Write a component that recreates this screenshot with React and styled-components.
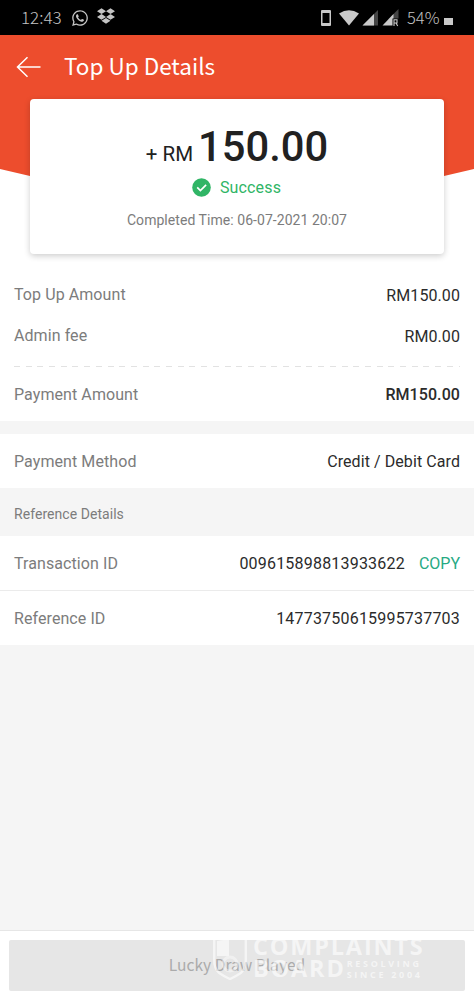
import React from 'react';
import styled, { createGlobalStyle } from 'styled-components';
import { FaWhatsapp, FaDropbox } from 'react-icons/fa';

const App = () => {
  return (
    <Screen>
      <GlobalStyle />
      <StatusBar>
        <StatusText $size={17} $width={41}>12:43</StatusText>
        <WhatsappIcon />
        <DropboxIcon />
        <Signals />
        <StatusText $size={16.5} $width={33}>54%</StatusText>
        <Battery />
      </StatusBar>

      <Hero>
        <TitleBar>
          <BackArrow />
          <Title>Top Up Details</Title>
        </TitleBar>
        <Card>
          <Amount>
            <Currency>+ RM</Currency>
            <Total>150.00</Total>
          </Amount>
          <Status>
            <CheckIcon />
            Success
          </Status>
          <Completed>Completed Time: 06-07-2021 20:07</Completed>
        </Card>
      </Hero>

      <Summary>
        <Row $height={41}>
          <Label>Top Up Amount</Label>
          <Value>RM150.00</Value>
        </Row>
        <Row $height={41}>
          <Label>Admin fee</Label>
          <Value>RM0.00</Value>
        </Row>
        <Dashes />
        <Row $height={54}>
          <Label>Payment Amount</Label>
          <Value $bold>RM150.00</Value>
        </Row>
      </Summary>

      <Method $height={54}>
        <Label>Payment Method</Label>
        <Value>Credit / Debit Card</Value>
      </Method>
      <SectionTitle>Reference Details</SectionTitle>
      <Row $height={55} $line>
        <Label>Transaction ID</Label>
        <Value $spacing={0.2}>009615898813933622</Value>
        <Copy>COPY</Copy>
      </Row>
      <Row $height={54}>
        <Label>Reference ID</Label>
        <Value $spacing={0.2}>14773750615995737703</Value>
      </Row>

      <Footer>
        <PlayedButton>Lucky Draw Played</PlayedButton>
        <Watermark>
          <Shield />
          <Brand>
            <BrandLine>COMPLAINTS</BrandLine>
            <BrandBottom>
              <BrandLine>BOARD</BrandLine>
              <Tagline>
                <span>RESOLVING</span>
                <span>SINCE 2004</span>
              </Tagline>
            </BrandBottom>
          </Brand>
        </Watermark>
      </Footer>
    </Screen>
  );
};

const Signals = () => (
  <SignalSvg width="82" height="20" viewBox="0 0 82 20">
    <path fillRule="evenodd" fill="#c9c9c9" d="M1 2h8q1 0 1 1v14q0 1-1 1H1q-1 0-1-1V3q0-1 1-1zM1.500 5v10h7V5z" />
    <path fill="#c9c9c9" d="M18 5.500q10-6.500 20 0L28 17.500z" />
    <path fill="#444" d="M57 2v15.500H41.500z" />
    <path fill="#c9c9c9" d="M53 6v11.500H41.500z" />
    <path fill="#444" d="M77.500 1v10H67.500z" />
    <path fill="#c9c9c9" d="M72.500 6v11.500H61.500z" />
    <path fill="#000" d="M71.500 10.500h7v8h-7z" />
    <path fill="none" stroke="#c9c9c9" strokeWidth="1.100" d="M73 18v-6.200h3v3.200h-3m2 0l1.700 3" />
  </SignalSvg>
);

const BackArrow = () => (
  <svg width="25" height="22" viewBox="0 0 25 22" fill="none" stroke="#fff" strokeWidth="1.500">
    <path d="M24.500 11H1.500M11.500 1.200L1.500 11l10 9.800" />
  </svg>
);

const CheckIcon = () => (
  <svg width="19" height="19" viewBox="0 0 19 19">
    <circle cx="9.500" cy="9.500" r="9.300" fill="#30b566" />
    <path d="M5.200 9.300l3.200 3.200 5.700-5.600" fill="none" stroke="#fff" strokeWidth="1.700" />
  </svg>
);

const Shield = () => (
  <svg width="34" height="43" viewBox="0 0 34 43">
    <path d="M1.200 1h31.600v22q0 9-5 13-6 4-10.800 6-5-2-10.800-6-5-4-5-13z" fill="none" stroke="#fff" strokeWidth="2.400" />
    <path d="M4 4l12-2v17H4z" fill="#fff" />
    <circle cx="17" cy="27" r="7" fill="none" stroke="#fff" strokeWidth="3" opacity=".7" />
  </svg>
);

const GlobalStyle = createGlobalStyle`
  * {
    box-sizing: border-box;
  }
  body {
    margin: 0;
    background: #f5f5f5;
  }
`;

const Screen = styled.main`
  display: flex;
  flex-direction: column;
  width: 474px;
  height: 1000px;
  overflow: hidden;
  background: #f5f5f5;
  font-family: Roboto, sans-serif;
`;

const StatusBar = styled.div`
  display: flex;
  align-items: center;
  flex: none;
  height: 35px;
  padding: 0 21px;
  background: #000;
  color: #c4c4c4;
`;

const StatusText = styled.span`
  width: ${(p) => p.$width}px;
  height: 35px;
  font-family: 'Noto Sans CJK SC', sans-serif;
  font-size: ${(p) => p.$size}px;
  font-weight: 300;
  line-height: 34px;
  white-space: nowrap;
`;

const WhatsappIcon = styled(FaWhatsapp)`
  width: 18px;
  height: 18px;
  margin-left: 9px;
`;

const DropboxIcon = styled(FaDropbox)`
  width: 18px;
  height: 18px;
  margin: 0 0 3px 8px;
`;

const SignalSvg = styled.svg`
  margin-left: auto;
  margin-right: 4px;
`;

const Battery = styled.div`
  width: 9px;
  height: 7px;
  margin: 7px 0 0 4px;
  background: #c9c9c9;
`;

const Hero = styled.section`
  flex: none;
  height: 239px;
  background: #fff;
  position: relative;

  &::before {
    content: '';
    position: absolute;
    inset: 0 0 auto;
    height: 181px;
    background: #ed4d2d;
    clip-path: polygon(0 0, 100% 0, 100% 134px, 444px 141px, 50% 178px, 30px 141px, 0 134px);
  }
`;

const TitleBar = styled.header`
  position: relative;
  display: flex;
  align-items: center;
  height: 64px;
  padding-left: 16px;
`;

const Title = styled.h1`
  margin: -5px 0 0 23px;
  color: #fff;
  font-family: 'Noto Sans CJK SC', sans-serif;
  font-size: 22.5px;
  font-weight: 400;
  line-height: 34px;
`;

const Card = styled.div`
  position: relative;
  display: flex;
  flex-direction: column;
  align-items: center;
  width: 414px;
  height: 155px;
  margin: 0 auto;
  padding-top: 24px;
  border-radius: 4px;
  background: #fff;
  box-shadow: 0 2px 6px rgba(0, 0, 0, 0.2);
`;

const Amount = styled.div`
  display: flex;
  align-items: baseline;
  height: 48px;
  color: #212121;
  line-height: 48px;
`;

const Currency = styled.span`
  margin-right: 5px;
  font-size: 20.5px;
`;

const Total = styled.span`
  font-size: 41.7px;
  font-weight: 500;
`;

const Status = styled.div`
  display: flex;
  align-items: center;
  gap: 9px;
  height: 24px;
  margin: 4px 1px 0 0;
  color: #30b566;
  font-size: 16px;
  letter-spacing: 0.15px;
`;

const Completed = styled.div`
  margin-top: 12px;
  color: #7c7c7c;
  font-size: 14px;
  line-height: 18px;
  letter-spacing: 0.05px;
`;

const Summary = styled.section`
  flex: none;
  height: 147px;
  background: #fff;
`;

const Row = styled.div`
  display: flex;
  align-items: center;
  flex: none;
  height: ${(p) => p.$height}px;
  padding: 0 14px;
  background: #fff;
  border-bottom: ${(p) => (p.$line ? '1px solid #ebebeb' : 'none')};
`;

const Method = styled(Row)`
  margin-top: 13px;
`;

const Label = styled.span`
  margin-right: auto;
  color: #7c7c7c;
  font-size: 16px;
  letter-spacing: 0.08px;
`;

const Value = styled.span`
  padding-top: 1px;
  color: #2b2b2b;
  font-size: 16px;
  font-weight: ${(p) => (p.$bold ? 500 : 400)};
  letter-spacing: ${(p) => p.$spacing || 0.08}px;
`;

const Copy = styled.button`
  margin-left: 14px;
  padding: 1px 0 0;
  border: 0;
  background: none;
  color: #26aa83;
  font: 16px Roboto, sans-serif;
`;

const Dashes = styled.div`
  height: 1px;
  margin: 10px 14px 0;
  background: repeating-linear-gradient(90deg, #e2e2e2 0 6px, transparent 6px 11.7px);
`;

const SectionTitle = styled.h2`
  flex: none;
  height: 48px;
  margin: 0;
  padding: 2px 14px 0;
  color: #7c7c7c;
  font-size: 14px;
  font-weight: 400;
  line-height: 48px;
  letter-spacing: 0.05px;
`;

const Footer = styled.footer`
  position: relative;
  flex: none;
  height: 70px;
  margin-top: auto;
  padding: 9px 9px 0;
  border-top: 1px solid #e6e6e6;
  background: #fff;
`;

const PlayedButton = styled.button`
  display: block;
  width: 456px;
  height: 51px;
  padding: 0 0 4px;
  border: 0;
  border-radius: 2px;
  background: #e6e6e6;
  color: #ababab;
  font-family: 'Noto Sans CJK SC', sans-serif;
  font-size: 15.6px;
`;

/* sits over the button */
const Watermark = styled.div`
  position: absolute;
  left: 213px;
  top: 6px;
  display: flex;
  gap: 6px;
  opacity: 0.6;
  color: #fff;
  pointer-events: none;
`;

const Brand = styled.div`
  margin-top: -2px;
  font-family: 'Open Sans', sans-serif;
`;

const BrandLine = styled.div`
  font-size: 23.5px;
  font-weight: 700;
  line-height: 22px;
  letter-spacing: 1.8px;
`;

const BrandBottom = styled.div`
  display: flex;
`;

const Tagline = styled.div`
  display: flex;
  flex-direction: column;
  margin-left: 1px;
  padding-top: 2px;
  font-size: 9px;
  font-weight: 700;
  line-height: 10.5px;
  letter-spacing: 2.7px;
  white-space: nowrap;
`;

export default App;
